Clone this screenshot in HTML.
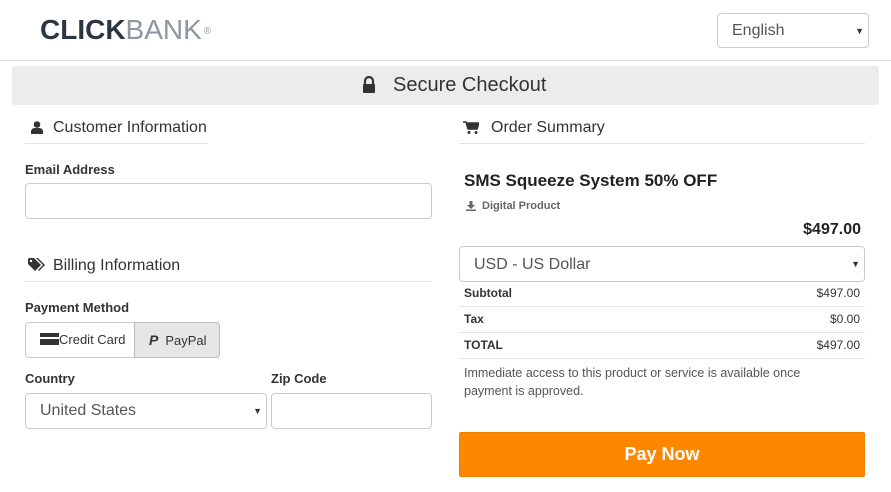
<!DOCTYPE html>
<html><head><meta charset="utf-8"><style>
*{box-sizing:border-box;margin:0;padding:0}
body{width:891px;height:492px;background:#fff;font-family:"Liberation Sans",Arial,sans-serif;color:#333;position:relative;overflow:hidden}
.a{position:absolute}
.inp{position:absolute;border:1px solid #ccc;border-radius:4px;background:#fff}
.lbl{position:absolute;font-size:13px;font-weight:bold;color:#333}
.h{position:absolute;font-size:16px;color:#333}
.line{position:absolute;height:1px;background:#e5e5e5}
.sel{font-size:16px;color:#555;padding-left:14px;line-height:33px}
.arr{position:absolute;right:4px;top:0;font-size:9px;color:#333}
.row{position:absolute;left:459px;width:406px;height:26px;border-bottom:1px solid #e5e5e5;font-size:12px;line-height:25px}
.row b{position:absolute;left:5px}.row span{position:absolute;right:5px}
</style></head><body>
<div class="a" style="left:40px;top:14px;font-size:28px;line-height:32px"><b style="color:#2d3540">CLICK</b><span style="color:#8e979f">BANK</span><sup style="font-size:10px;color:#999;vertical-align:top;position:relative;top:2px;margin-left:2px">®</sup></div>
<div class="inp" style="left:717px;top:13px;width:152px;height:35px"><div class="sel" style="line-height:33px">English</div><div class="arr" style="top:12px">▼</div></div>
<div class="line" style="left:0;top:60px;width:891px;background:#ddd"></div>
<div class="a" style="left:12px;top:66px;width:867px;height:39px;background:#ececec;border-radius:3px"></div>
<svg class="a" style="left:362px;top:76px" width="14" height="17" viewBox="0 0 14 17"><path d="M3 8V5a4 4 0 0 1 8 0v3" fill="none" stroke="#333" stroke-width="2.2"/><rect x="1" y="8" width="12" height="9" rx="1" fill="#333"/></svg>
<div class="a" style="left:393px;top:74px;font-size:20px;color:#333">Secure Checkout</div>

<svg class="a" style="left:31px;top:121px" width="12" height="13" viewBox="0 0 12 13"><circle cx="6" cy="3.5" r="3.3" fill="#333"/><path d="M0 13v-3a4 4 0 0 1 4-3h4a4 4 0 0 1 4 3v3z" fill="#333"/></svg>
<div class="h" style="left:53px;top:119px">Customer Information</div>
<div class="line" style="left:25px;top:143px;width:183px"></div>
<div class="lbl" style="left:25px;top:162px">Email Address</div>
<div class="inp" style="left:25px;top:183px;width:407px;height:36px"></div>

<svg class="a" style="left:28px;top:258px" width="18" height="14" viewBox="0 0 18 14"><path d="M0 1v5l7 7 6-6-7-7H1z" fill="#333"/><circle cx="3" cy="3" r="1.2" fill="#fff"/><path d="M8 0h2l7 7-6 6-1-1 5-5z" fill="#333"/></svg>
<div class="h" style="left:53px;top:257px">Billing Information</div>
<div class="line" style="left:25px;top:281px;width:407px"></div>
<div class="lbl" style="left:25px;top:300px">Payment Method</div>
<div class="a" style="left:25px;top:322px;width:110px;height:36px;border:1px solid #ccc;border-radius:4px 0 0 4px;font-size:13px;line-height:34px;padding-left:14px"><span style="display:inline-block;width:19px;height:12px;background:#333;vertical-align:-1px;border-top:4px solid #333;box-shadow:inset 0 2px 0 #fff"></span>Credit Card</div>
<div class="a" style="left:134px;top:322px;width:86px;height:36px;border:1px solid #bbb;border-radius:0 4px 4px 0;background:#e6e6e6;font-size:13px;line-height:34px;padding-left:14px"><b style="font-style:italic;font-size:14px;margin-right:7px">P</b>PayPal</div>
<div class="lbl" style="left:25px;top:371px">Country</div>
<div class="lbl" style="left:271px;top:371px">Zip Code</div>
<div class="inp" style="left:25px;top:393px;width:242px;height:36px"><div class="sel">United States</div><div class="arr" style="top:12px">▼</div></div>
<div class="inp" style="left:271px;top:393px;width:161px;height:36px"></div>

<svg class="a" style="left:463px;top:121px" width="16" height="13" viewBox="0 0 16 13"><path d="M0 1h3l2 7h9l2-6H4" fill="#333" stroke="#333" stroke-width="1.5"/><circle cx="6" cy="11.5" r="1.5" fill="#333"/><circle cx="13" cy="11.5" r="1.5" fill="#333"/></svg>
<div class="h" style="left:491px;top:119px">Order Summary</div>
<div class="line" style="left:459px;top:143px;width:406px"></div>
<div class="a" style="left:464px;top:171px;font-size:17px;font-weight:bold;color:#222">SMS Squeeze System 50% OFF</div>
<svg class="a" style="left:466px;top:201px" width="10" height="10" viewBox="0 0 10 10"><path d="M3.5 0h3v4h2.5L5 8 1 4h2.5z" fill="#666"/><rect x="0" y="8.5" width="10" height="1.5" fill="#666"/></svg>
<div class="a" style="left:482px;top:200px;font-size:11px;font-weight:bold;color:#666">Digital Product</div>
<div class="a" style="right:30px;top:221px;font-size:16px;font-weight:bold;color:#222">$497.00</div>
<div class="inp" style="left:459px;top:246px;width:406px;height:36px"><div class="sel" style="line-height:35px">USD - US Dollar</div><div class="arr" style="top:12px">▼</div></div>
<div class="row" style="top:281px"><b>Subtotal</b><span>$497.00</span></div>
<div class="row" style="top:307px"><b>Tax</b><span>$0.00</span></div>
<div class="row" style="top:333px"><b>TOTAL</b><span>$497.00</span></div>
<div class="a" style="left:464px;top:364px;width:370px;font-size:12.5px;line-height:18px;color:#555">Immediate access to this product or service is available once payment is approved.</div>
<div class="a" style="left:459px;top:432px;width:406px;height:45px;background:#ff8700;border:1px solid #f08000;border-radius:2px;color:#fff;font-size:18px;font-weight:bold;text-align:center;line-height:43px">Pay Now</div>
</body></html>
